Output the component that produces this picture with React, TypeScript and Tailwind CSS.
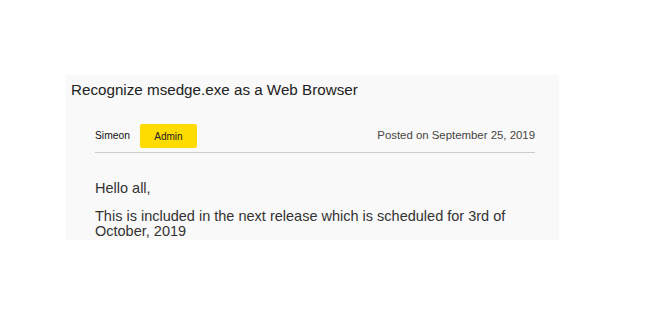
import React from "react";

const App: React.FC = () => {
  return (
    <div
      className="w-[661px] h-[324px] bg-white pt-[75px] pl-[66px]"
      style={{ fontFamily: '"Liberation Sans", Arial, sans-serif' }}
    >
      <div className="w-[493px] h-[165px] bg-[#f9f9f9]">
        <h1 className="pl-[5px] pt-[6px] text-[15.2px] leading-[18px] text-[#222]">
          Recognize msedge.exe as a Web Browser
        </h1>
        <div className="ml-[29px] mr-[24px] mt-[25px]">
          <div className="flex items-center justify-between border-b border-[#cccccc] pb-[4px]">
            <div className="flex items-center">
              <span className="text-[10.3px] font-medium text-[#111]">Simeon</span>
              <span className="ml-[10px] flex h-[24px] w-[57px] items-center justify-center rounded-[2px] bg-[#ffdc00] text-[10px] text-[#222]">
                Admin
              </span>
            </div>
            <span className="text-[11.4px] text-[#444]">Posted on September 25, 2019</span>
          </div>
          <div className="pt-[27px] text-[14.5px] leading-[16px] text-[#333]">
            <p>Hello all,</p>
            <p className="mt-[13px] leading-[15px]">
              This is included in the next release which is scheduled for 3rd of
              <br />
              October, 2019
            </p>
          </div>
        </div>
      </div>
    </div>
  );
};

export default App;
